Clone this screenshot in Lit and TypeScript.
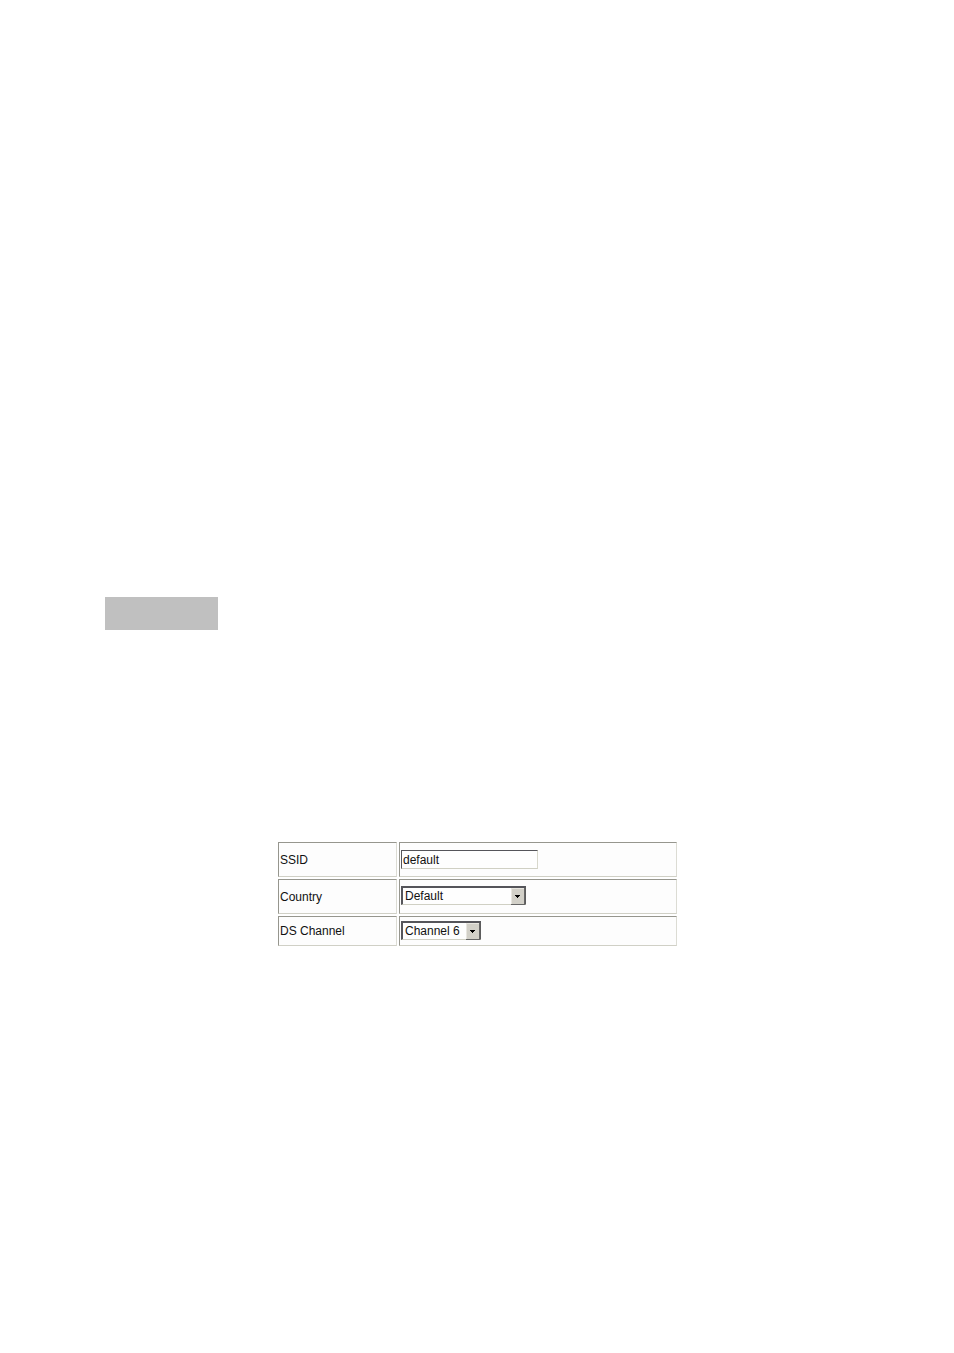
import { LitElement, html, css } from "lit";
import { customElement } from "lit/decorators.js";

@customElement("app-root")
class AppRoot extends LitElement {
  static styles = css`
    :host {
      display: block;
      min-height: 100vh;
      background: #fff;
      color: #111;
      font: 12px/16px "Liberation Sans", Arial, sans-serif;
    }
    main {
      display: flex;
      flex-direction: column;
      padding: 597px 105px 0;
    }
    .block {
      width: 113px;
      height: 33px;
      background: #c0c0c0;
    }
    form {
      margin: 210px 0 0 171px;
    }
    table {
      width: 100%;
      max-width: 403px;
      table-layout: fixed;
      border-collapse: separate;
      border-spacing: 2px;
    }
    th,
    td {
      box-sizing: border-box;
      height: 35px;
      padding: 0 1px;
      border: 1px solid;
      border-color: #96968e #dcdcd4 #d0d0c6 #96968e;
      background: #fdfdfd;
      text-align: left;
      vertical-align: middle;
      font-weight: normal;
    }
    th {
      width: 119px;
    }
    .short > * {
      height: 30px;
    }
    input,
    select {
      display: block;
      box-sizing: border-box;
      height: 19px;
      margin: 0;
      border: 1px solid;
      border-color: #55555a #d8d8cc #d0d0c4 #55555a;
      border-radius: 0;
      background: #fefefe;
      color: #111;
      font: inherit;
    }
    input {
      width: 137px;
      padding: 0 1px;
    }
    .picker {
      padding-bottom: 2px;
    }
    .box {
      position: relative;
      width: 125px;
    }
    .box.narrow {
      width: 80px;
    }
    select {
      appearance: none;
      width: 100%;
      padding: 0 16px 0 2px;
      border-width: 2px 1px 1px 2px;
      border-right-color: #5c5c5c;
    }
    .arrow {
      position: absolute;
      top: 2px;
      right: 1px;
      width: 14px;
      height: 17px;
      pointer-events: none;
    }
  `;

  private picker(id: string, size: string, options: string[]) {
    return html`<div class="box ${size}">
      <select id=${id} name=${id}>
        ${options.map((o) => html`<option>${o}</option>`)}
      </select>
      <svg class="arrow" viewBox="0 0 14 17" shape-rendering="crispEdges" aria-hidden="true">
        <rect width="14" height="17" fill="#d2d0c8" />
        <path d="M0 17V0H14" fill="none" stroke="#e8e6e0" stroke-width="2" />
        <path d="M0 16.5H13.5V0" fill="none" stroke="#666" />
        <path d="M4 7h5v1h-1v1h-1v1h-1v-1h-1v-1h-1z" fill="#000" />
      </svg>
    </div>`;
  }

  render() {
    return html`<main>
      <div class="block"></div>
      <form>
        <table>
          <tr>
            <th scope="row"><label for="ssid">SSID</label></th>
            <td><input id="ssid" name="ssid" type="text" value="default" /></td>
          </tr>
          <tr>
            <th scope="row"><label for="country">Country</label></th>
            <td class="picker">${this.picker("country", "wide", ["Default"])}</td>
          </tr>
          <tr class="short">
            <th scope="row"><label for="channel">DS Channel</label></th>
            <td class="picker">${this.picker("channel", "narrow", ["Channel 6"])}</td>
          </tr>
        </table>
      </form>
    </main>`;
  }
}
